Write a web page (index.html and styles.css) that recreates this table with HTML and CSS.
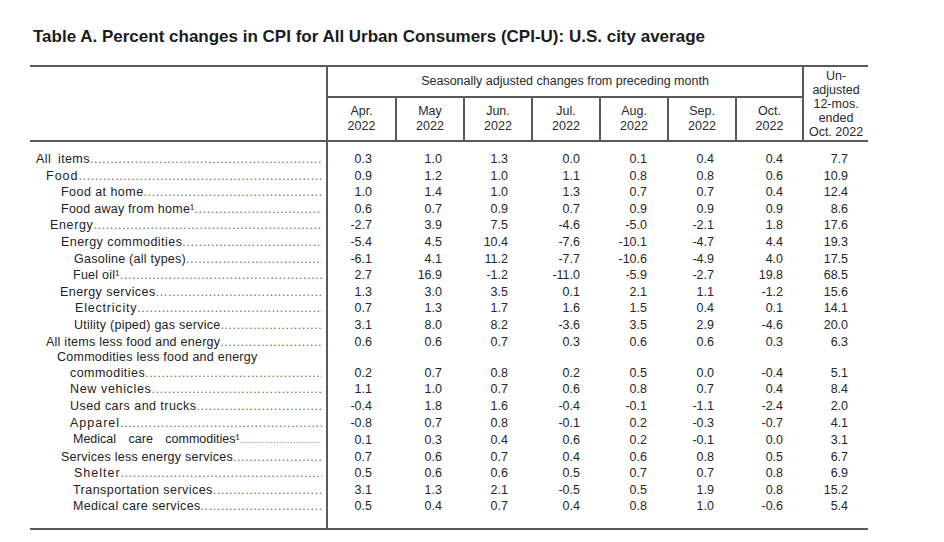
FILE: index.html
```html
<!DOCTYPE html>
<html lang="en">
<head>
<meta charset="utf-8">
<title>Table A. Percent changes in CPI</title>
<link rel="stylesheet" href="styles.css">
</head>
<body>
<div class="page">
  <h1 class="title">Table A. Percent changes in CPI for All Urban Consumers (CPI-U): U.S. city average</h1>
  <table class="cpi">
    <colgroup>
      <col class="c-stub"><col class="c-m67"><col class="c-m68"><col class="c-m68"><col class="c-m68"><col class="c-m68"><col class="c-m68"><col class="c-m67"><col class="c-un">
    </colgroup>
    <thead>
      <tr class="h1">
        <th class="stub" rowspan="2"></th>
        <th class="group" colspan="7">Seasonally adjusted changes from preceding month</th>
        <th class="unadj" rowspan="2">Un-<br>adjusted<br>12-mos.<br>ended<br>Oct. 2022</th>
      </tr>
      <tr class="h2">
        <th class="mon first-mon">Apr.<br>2022</th>
        <th class="mon">May<br>2022</th>
        <th class="mon">Jun.<br>2022</th>
        <th class="mon">Jul.<br>2022</th>
        <th class="mon">Aug.<br>2022</th>
        <th class="mon">Sep.<br>2022</th>
        <th class="mon">Oct.<br>2022</th>
      </tr>
    </thead>
    <tbody>
      <tr class="first">
        <th class="lab"><div class="l i6 ws"><span class="t">All items</span><span class="d"></span></div></th>
        <td>0.3</td><td>1.0</td><td>1.3</td><td>0.0</td><td>0.1</td><td>0.4</td><td>0.4</td><td>7.7</td>
      </tr>
      <tr>
        <th class="lab"><div class="l i16 sp1"><span class="t">Food</span><span class="d"></span></div></th>
        <td>0.9</td><td>1.2</td><td>1.0</td><td>1.1</td><td>0.8</td><td>0.8</td><td>0.6</td><td>10.9</td>
      </tr>
      <tr>
        <th class="lab"><div class="l i31 sp05"><span class="t">Food at home</span><span class="d"></span></div></th>
        <td>1.0</td><td>1.4</td><td>1.0</td><td>1.3</td><td>0.7</td><td>0.7</td><td>0.4</td><td>12.4</td>
      </tr>
      <tr>
        <th class="lab"><div class="l i31"><span class="t">Food away from home¹</span><span class="d"></span></div></th>
        <td>0.6</td><td>0.7</td><td>0.9</td><td>0.7</td><td>0.9</td><td>0.9</td><td>0.9</td><td>8.6</td>
      </tr>
      <tr>
        <th class="lab"><div class="l i20 sp06"><span class="t">Energy</span><span class="d"></span></div></th>
        <td>-2.7</td><td>3.9</td><td>7.5</td><td>-4.6</td><td>-5.0</td><td>-2.1</td><td>1.8</td><td>17.6</td>
      </tr>
      <tr>
        <th class="lab"><div class="l i31 sp05"><span class="t">Energy commodities</span><span class="d"></span></div></th>
        <td>-5.4</td><td>4.5</td><td>10.4</td><td>-7.6</td><td>-10.1</td><td>-4.7</td><td>4.4</td><td>19.3</td>
      </tr>
      <tr>
        <th class="lab"><div class="l i44"><span class="t">Gasoline (all types)</span><span class="d"></span></div></th>
        <td>-6.1</td><td>4.1</td><td>11.2</td><td>-7.7</td><td>-10.6</td><td>-4.9</td><td>4.0</td><td>17.5</td>
      </tr>
      <tr>
        <th class="lab"><div class="l i43"><span class="t">Fuel oil¹</span><span class="d"></span></div></th>
        <td>2.7</td><td>16.9</td><td>-1.2</td><td>-11.0</td><td>-5.9</td><td>-2.7</td><td>19.8</td><td>68.5</td>
      </tr>
      <tr>
        <th class="lab"><div class="l i30 sp05"><span class="t">Energy services</span><span class="d"></span></div></th>
        <td>1.3</td><td>3.0</td><td>3.5</td><td>0.1</td><td>2.1</td><td>1.1</td><td>-1.2</td><td>15.6</td>
      </tr>
      <tr>
        <th class="lab"><div class="l i45 sp08"><span class="t">Electricity</span><span class="d"></span></div></th>
        <td>0.7</td><td>1.3</td><td>1.7</td><td>1.6</td><td>1.5</td><td>0.4</td><td>0.1</td><td>14.1</td>
      </tr>
      <tr>
        <th class="lab"><div class="l i44"><span class="t">Utility (piped) gas service</span><span class="d"></span></div></th>
        <td>3.1</td><td>8.0</td><td>8.2</td><td>-3.6</td><td>3.5</td><td>2.9</td><td>-4.6</td><td>20.0</td>
      </tr>
      <tr>
        <th class="lab"><div class="l i16"><span class="t">All items less food and energy</span><span class="d"></span></div></th>
        <td>0.6</td><td>0.6</td><td>0.7</td><td>0.3</td><td>0.6</td><td>0.6</td><td>0.3</td><td>6.3</td>
      </tr>
      <tr class="head-row">
        <th class="lab"><div class="l i27"><span class="t">Commodities less food and energy</span></div></th>
        <td></td><td></td><td></td><td></td><td></td><td></td><td></td><td></td>
      </tr>
      <tr>
        <th class="lab"><div class="l i40 sp05"><span class="t">commodities</span><span class="d"></span></div></th>
        <td>0.2</td><td>0.7</td><td>0.8</td><td>0.2</td><td>0.5</td><td>0.0</td><td>-0.4</td><td>5.1</td>
      </tr>
      <tr>
        <th class="lab"><div class="l i40 sp06"><span class="t">New vehicles</span><span class="d"></span></div></th>
        <td>1.1</td><td>1.0</td><td>0.7</td><td>0.6</td><td>0.8</td><td>0.7</td><td>0.4</td><td>8.4</td>
      </tr>
      <tr>
        <th class="lab"><div class="l i40 sp05"><span class="t">Used cars and trucks</span><span class="d"></span></div></th>
        <td>-0.4</td><td>1.8</td><td>1.6</td><td>-0.4</td><td>-0.1</td><td>-1.1</td><td>-2.4</td><td>2.0</td>
      </tr>
      <tr>
        <th class="lab"><div class="l i40 sp1"><span class="t">Apparel</span><span class="d"></span></div></th>
        <td>-0.8</td><td>0.7</td><td>0.8</td><td>-0.1</td><td>0.2</td><td>-0.3</td><td>-0.7</td><td>4.1</td>
      </tr>
      <tr>
        <th class="lab"><div class="l i43 wide"><span class="t">Medical care commodities¹</span><span class="d small"></span></div></th>
        <td>0.1</td><td>0.3</td><td>0.4</td><td>0.6</td><td>0.2</td><td>-0.1</td><td>0.0</td><td>3.1</td>
      </tr>
      <tr>
        <th class="lab"><div class="l i31"><span class="t">Services less energy services</span><span class="d"></span></div></th>
        <td>0.7</td><td>0.6</td><td>0.7</td><td>0.4</td><td>0.6</td><td>0.8</td><td>0.5</td><td>6.7</td>
      </tr>
      <tr>
        <th class="lab"><div class="l i44 sp1"><span class="t">Shelter</span><span class="d"></span></div></th>
        <td>0.5</td><td>0.6</td><td>0.6</td><td>0.5</td><td>0.7</td><td>0.7</td><td>0.8</td><td>6.9</td>
      </tr>
      <tr>
        <th class="lab"><div class="l i43 sp05"><span class="t">Transportation services</span><span class="d"></span></div></th>
        <td>3.1</td><td>1.3</td><td>2.1</td><td>-0.5</td><td>0.5</td><td>1.9</td><td>0.8</td><td>15.2</td>
      </tr>
      <tr class="last">
        <th class="lab"><div class="l i43 sp03"><span class="t">Medical care services</span><span class="d"></span></div></th>
        <td>0.5</td><td>0.4</td><td>0.7</td><td>0.4</td><td>0.8</td><td>1.0</td><td>-0.6</td><td>5.4</td>
      </tr>
    </tbody>
  </table>
</div>
</body>
</html>
```

FILE: styles.css
```css
* {
  box-sizing: border-box;
}

body {
  margin: 0;
  background: #ffffff;
  font-family: "Liberation Sans", Arial, sans-serif;
  color: #222222;
}

.page {
  padding: 27px 0 0 30px;
}

.title {
  margin: 0 0 18px 3px;
  font-size: 17px;
  line-height: 20px;
  font-weight: bold;
  color: #1b1b1b;
}

.cpi {
  border-collapse: separate;
  border-spacing: 0;
  table-layout: fixed;
  width: 838px;
  font-size: 12.5px;
  border-top: 2px solid #5a5a5a;
  border-bottom: 2px solid #5a5a5a;
}

.c-stub { width: 298px; }
.c-m67 { width: 67px; }
.c-m68 { width: 68px; }
.c-un { width: 66px; }

.cpi th {
  font-weight: normal;
  padding: 0;
}

/* header */
.h1 { height: 31px; }
.h2 { height: 44px; }

.stub {
  border-right: 2px solid #5a5a5a;
  border-bottom: 2px solid #5a5a5a;
}

.group {
  border-bottom: 2px solid #5a5a5a;
  text-align: center;
  vertical-align: middle;
  line-height: 15px;
  color: #2a2a2a;
}

.mon {
  border-bottom: 2px solid #5a5a5a;
  border-left: 2px solid #5a5a5a;
  text-align: center;
  vertical-align: middle;
  line-height: 15px;
  color: #2a2a2a;
}

.mon.first-mon {
  border-left: none;
}

.unadj {
  border-left: 2px solid #5a5a5a;
  border-bottom: 2px solid #5a5a5a;
  text-align: center;
  vertical-align: middle;
  line-height: 14px;
  color: #2a2a2a;
}

/* body */
.cpi tbody td,
.cpi tbody th {
  line-height: 16.6px;
  padding-top: 0;
  padding-bottom: 0;
  vertical-align: middle;
}

.cpi tbody td {
  text-align: right;
  color: #262626;
}

.cpi tbody td:nth-child(2) { padding-right: 23px; }
.cpi tbody td:nth-child(3) { padding-right: 21px; }
.cpi tbody td:nth-child(4) { padding-right: 23px; }
.cpi tbody td:nth-child(5) { padding-right: 19px; }
.cpi tbody td:nth-child(6) { padding-right: 20px; }
.cpi tbody td:nth-child(7) { padding-right: 21px; }
.cpi tbody td:nth-child(8) { padding-right: 19px; }
.cpi tbody td:nth-child(9) { padding-right: 20px; }

.cpi tbody tr.first td,
.cpi tbody tr.first th {
  padding-top: 9px;
}

.cpi tbody tr.last td,
.cpi tbody tr.last th {
  padding-bottom: 13px;
}

.cpi tbody tr.head-row td,
.cpi tbody tr.head-row th {
  line-height: 14.6px;
}

.lab {
  text-align: left;
  border-right: 2px solid #5a5a5a;
}

.l {
  display: flex;
  align-items: baseline;
  padding-right: 4px;
  letter-spacing: 0.25px;
  color: #222222;
}

.t {
  white-space: nowrap;
}

.d {
  flex: 1;
  min-width: 0;
  overflow: hidden;
  white-space: nowrap;
  color: #6a6a6a;
  letter-spacing: 0.6px;
}

.d::after {
  content: "..............................................................................................................................................................";
}

.d.small {
  font-size: 9px;
  letter-spacing: 0.3px;
}

/* indents */
.i6 { padding-left: 6px; }
.i16 { padding-left: 16px; }
.i20 { padding-left: 20px; }
.i27 { padding-left: 27px; }
.i30 { padding-left: 30px; }
.i31 { padding-left: 31px; }
.i40 { padding-left: 40px; }
.i43 { padding-left: 43px; }
.i44 { padding-left: 44px; }
.i45 { padding-left: 45px; }

/* letter spacing variations seen in the source */
.sp03 { letter-spacing: 0.35px; }
.sp05 { letter-spacing: 0.45px; }
.sp06 { letter-spacing: 0.65px; }
.sp08 { letter-spacing: 0.8px; }
.sp1 { letter-spacing: 1px; }
.ws { letter-spacing: 0.4px; word-spacing: 3px; }
.wide { word-spacing: 9px; letter-spacing: 0; }
```
